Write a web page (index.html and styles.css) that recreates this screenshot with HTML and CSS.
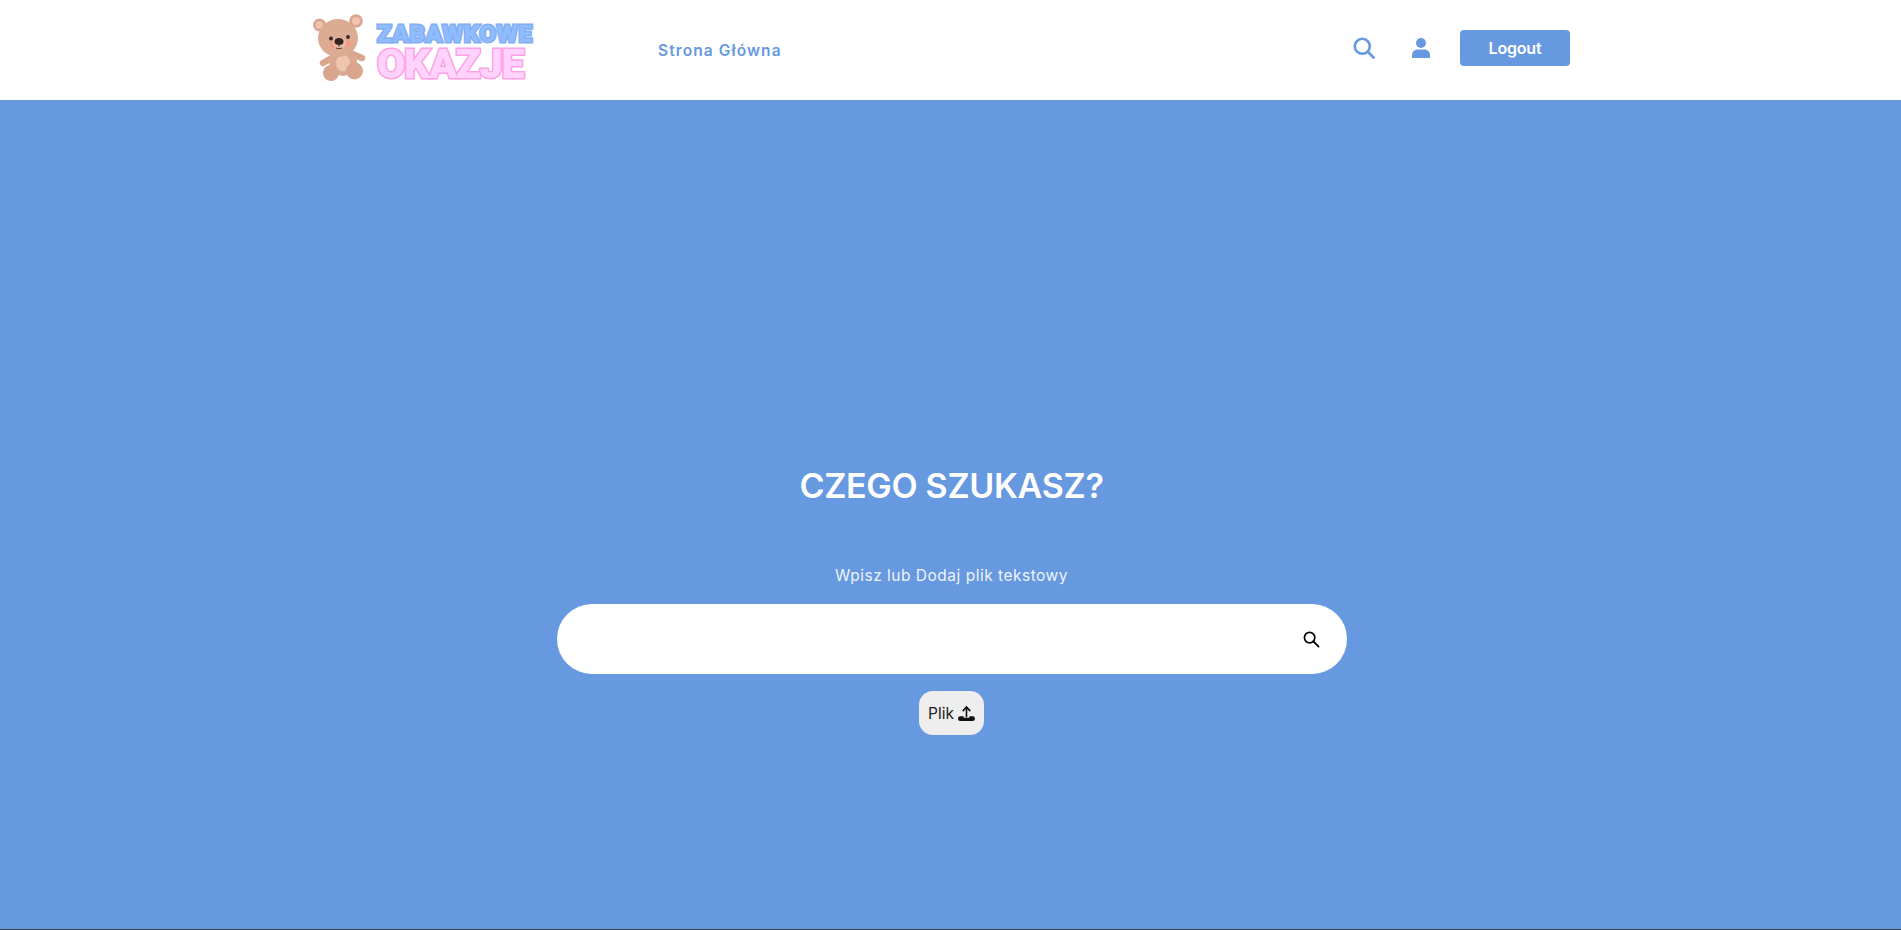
FILE: index.html
```html
<!DOCTYPE html>
<html lang="pl">
<head>
<meta charset="utf-8">
<title>Zabawkowe Okazje</title>
<link rel="stylesheet" href="styles.css">
</head>
<body>
<header class="nav">
  <div class="nav-inner">
    <a class="logo" href="#">
      <svg class="bear" viewBox="0 0 54 71" width="54" height="71" aria-hidden="true">
        <circle cx="7.500" cy="13" r="6.500" fill="#d9a68d"/><circle cx="7.500" cy="13" r="3.800" fill="#efc3b0"/>
        <circle cx="44" cy="9" r="6.800" fill="#d9a68d"/><circle cx="44" cy="9" r="4" fill="#efc3b0"/>
        <path d="M11 51 L25 43 M50 46 L38 41" stroke="#d9a68d" stroke-width="6.500" stroke-linecap="round"/>
        <ellipse cx="31" cy="49" rx="14" ry="15" fill="#dba98f"/>
        <ellipse cx="31" cy="51" rx="7" ry="8.500" fill="#efc4b1"/>
        <circle cx="19" cy="61" r="8" fill="#d9a68d"/><circle cx="42.500" cy="59" r="8.500" fill="#d9a68d"/>
        <ellipse cx="26" cy="26" rx="20" ry="19" fill="#dcab93"/>
        <circle cx="22" cy="33" r="3.300" fill="#f29c86"/><circle cx="36" cy="32" r="3.300" fill="#f29c86"/>
        <ellipse cx="27.500" cy="31" rx="6.500" ry="5.500" fill="#e8bda7"/>
        <circle cx="19" cy="26.500" r="1.900" fill="#3a2a25"/><circle cx="36" cy="25" r="1.900" fill="#3a2a25"/>
        <ellipse cx="27" cy="29.500" rx="4.500" ry="3.500" fill="#33241f"/>
        <path d="M27 32 V35 M24 36 Q27 37.500 30 36" stroke="#4a3028" stroke-width="0.900" fill="none"/>
      </svg>
      <span class="logo-text">
        <span class="logo-top">ZABAWKOWE</span>
        <span class="logo-bottom">OKAZJE</span>
      </span>
    </a>
    <nav class="menu"><a href="#">Strona Główna</a></nav>
    <div class="actions">
      <svg class="ic-search" viewBox="0 0 22 22" width="22" height="22" aria-hidden="true">
        <circle cx="9.300" cy="9.300" r="7.500" fill="none" stroke="#6699e0" stroke-width="2.600"/>
        <path d="M14.800 14.800 L20.500 20.500" stroke="#6699e0" stroke-width="2.800" stroke-linecap="round"/>
      </svg>
      <svg class="ic-user" viewBox="0 0 20 20" width="20" height="20" aria-hidden="true">
        <circle cx="10" cy="5" r="5" fill="#6699e0"/>
        <path d="M1 20 V17 C1 13.500 4 11.500 7 11.500 H13 C16 11.500 19 13.500 19 17 V20Z" fill="#6699e0"/>
      </svg>
      <button class="logout" type="button">Logout</button>
    </div>
  </div>
</header>
<main class="hero">
  <h1 class="title">CZEGO SZUKASZ?</h1>
  <p class="sub">Wpisz lub Dodaj plik tekstowy</p>
  <div class="search">
    <svg viewBox="0 0 18 18" width="17" height="17" aria-hidden="true">
      <circle cx="7" cy="7" r="5.500" fill="none" stroke="#000" stroke-width="1.800"/>
      <path d="M11 11 L16.500 16.500" stroke="#000" stroke-width="2" stroke-linecap="round"/>
    </svg>
  </div>
  <button class="file" type="button">Plik
    <svg viewBox="0 0 18 18" width="17" height="17" aria-hidden="true">
      <path d="M9 13 V2.500 M5 6.500 L9 2 L13 6.500" fill="none" stroke="#111" stroke-width="1.700"/>
      <path d="M2.500 12 H6 V13.500 H12 V12 H15.500 A2.500 2.500 0 0 1 15.500 17 H2.500 A2.500 2.500 0 0 1 2.500 12Z" fill="#111"/>
    </svg>
  </button>
</main>
</body>
</html>
```
FILE: styles.css
```css
* { box-sizing: border-box; }
html, body { margin: 0; height: 100%; }
body {
  font-family: "Inter", "Lato", "Liberation Sans", sans-serif;
  background: #fff;
  display: flex;
  flex-direction: column;
  height: 930px;
  overflow: hidden;
  border-bottom: 1px solid #3a3f47;
}
.nav {
  height: 100px;
  flex: none;
  background: #fff;
  padding-left: 312px;
}
.nav-inner {
  width: 1258px;
  height: 100%;
  display: flex;
  align-items: center;
}
.logo {
  display: flex;
  align-items: center;
  gap: 11px;
  width: 346px;
  text-decoration: none;
}
.bear { flex: none; margin-bottom: 5px; }
.logo-text {
  display: flex;
  flex-direction: column;
  font-family: "Roboto", "Liberation Sans", sans-serif;
  font-weight: 900;
  margin-top: 5px;
  paint-order: stroke fill;
}
.logo-top {
  font-size: 24px;
  line-height: 23px;
  height: 23px;
  letter-spacing: 0.700px;
  color: #8fbbff;
  -webkit-text-stroke: 3px #84aef0;
  paint-order: stroke fill;
}
.logo-bottom {
  font-size: 41px;
  line-height: 36px;
  height: 36px;
  letter-spacing: -1.200px;
  color: #ffd3fb;
  -webkit-text-stroke: 3px #ff9fe6;
  paint-order: stroke fill;
}
.menu a {
  font-size: 15.500px;
  font-weight: 600;
  letter-spacing: 1.100px;
  color: #6699e0;
  text-decoration: none;
}
.actions {
  margin-left: auto;
  margin-bottom: 4px;
  display: flex;
  align-items: center;
}
.ic-search { margin-right: 36px; }
.ic-user { margin-right: 29px; }
.logout {
  width: 110px;
  height: 36px;
  border: 0;
  border-radius: 4px;
  background: #6699e0;
  color: #fff;
  font: 600 16px "Inter", sans-serif;
  letter-spacing: -0.200px;
}
.hero {
  flex: 1;
  background: #6699e0;
  display: flex;
  flex-direction: column;
  align-items: center;
  padding: 363px 0 0 2px;
  color: #fff;
}
.title {
  margin: 0;
  font-size: 34px;
  line-height: 46px;
  font-weight: 600;
  letter-spacing: -0.300px;
}
.sub {
  margin: 55px 0 0;
  font-size: 15.500px;
  line-height: 24px;
  letter-spacing: 0.500px;
  color: #eef3fb;
}
.search {
  margin-top: 16px;
  width: 790px;
  height: 70px;
  border-radius: 35px;
  background: #fff;
  display: flex;
  align-items: center;
  justify-content: flex-end;
  padding: 0 27px 0 0;
}
.file {
  margin-top: 17px;
  width: 65px;
  height: 44px;
  border: 0;
  border-radius: 14px;
  background: #eeeeee;
  color: #222;
  font: 400 15.500px "Inter", sans-serif;
  display: flex;
  align-items: center;
  justify-content: center;
  gap: 4px;
  padding: 0;
}
```
